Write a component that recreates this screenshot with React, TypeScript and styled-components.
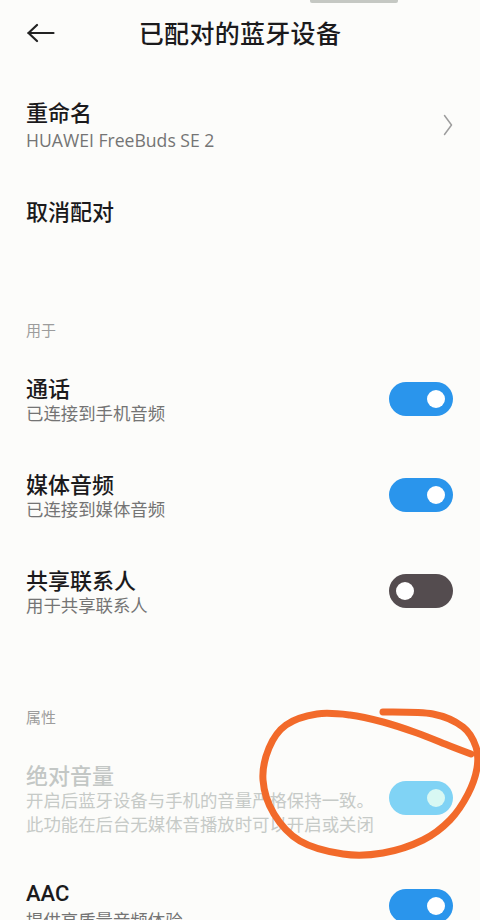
import React from "react";
import styled, { createGlobalStyle } from "styled-components";

const Global = createGlobalStyle`
  html, body { margin: 0; padding: 0; background: #fcfcfa; }
  body { font-family: "Noto Sans CJK SC", "Noto Sans", sans-serif; overflow: hidden; }
`;

const Page = styled.div`
  position: relative;
  width: 480px;
  min-height: 920px;
  background: #fcfcfa;
  color: #1b1a1c;
`;

const TopStrip = styled.div`
  height: 3px;
  display: flex;
  padding-left: 310px;
`;

const StripBar = styled.div`
  width: 88px;
  height: 3px;
  background: #c5c8c3;
  border-radius: 0 0 2px 2px;
`;

const Header = styled.header`
  height: 57px;
  display: flex;
  align-items: center;
  padding: 0 27px;
`;

const BackButton = styled.div`
  width: 28px;
  height: 28px;
  display: flex;
  align-items: center;
  margin-top: 3px;
`;

const Title = styled.h1`
  flex: 1;
  margin: 0;
  padding-right: 28px;
  text-align: center;
  font-size: 25px;
  line-height: 32px;
  font-weight: 500;
  color: #1b1a1c;
  letter-spacing: 0.3px;
`;

const Group = styled.section<{ $bottom?: number }>`
  padding-top: 15px;
  padding-bottom: ${(p) => p.$bottom ?? 0}px;
`;

const Section = styled.section<{ $top: number }>`
  display: flex;
  flex-direction: column;
  padding-top: ${(p) => p.$top}px;
`;

const SectionLabel = styled.div`
  padding: 0 26px 11px;
  font-size: 15px;
  line-height: 20px;
  color: #9c9c9c;
`;

const Row = styled.div`
  display: flex;
  align-items: center;
  padding: 22px 27px 22px 26px;
  gap: 12px;
`;

const TextBlock = styled.div`
  flex: 1;
  display: flex;
  flex-direction: column;
  min-width: 0;
`;

const RowTitle = styled.div<{ $muted?: boolean; $latin?: boolean }>`
  font-size: 22px;
  line-height: 28px;
  font-weight: 500;
  color: ${(p) => (p.$muted ? "#c3c7c5" : "#1b1a1c")};
  font-family: ${(p) =>
    p.$latin ? `"Roboto", "Noto Sans CJK SC", sans-serif` : `"Noto Sans CJK SC", sans-serif`};
`;

const RowSub = styled.div<{ $muted?: boolean; $latin?: boolean }>`
  font-size: ${(p) => (p.$latin ? "17.6px" : "17.4px")};
  line-height: 24px;
  margin-top: ${(p) => (p.$latin ? "3px" : "0")};
  color: ${(p) => (p.$muted ? "#c6cac7" : "#747474")};
  white-space: nowrap;
  font-family: ${(p) =>
    p.$latin ? `"Open Sans", "Noto Sans CJK SC", sans-serif` : `"Noto Sans CJK SC", sans-serif`};
`;

const Chevron = styled.div`
  width: 10px;
  height: 22px;
  display: flex;
  align-items: center;
`;

const Switch = styled.div<{ $on: boolean; $muted?: boolean }>`
  flex: none;
  width: 64px;
  height: 34px;
  border-radius: 17px;
  box-sizing: border-box;
  padding: 0 8px 0 7px;
  display: flex;
  align-items: center;
  justify-content: ${(p) => (p.$on ? "flex-end" : "flex-start")};
  background: ${(p) => (p.$muted ? "#80d3f5" : p.$on ? "#2a95ec" : "#544c4f")};
`;

const Knob = styled.span<{ $muted?: boolean }>`
  width: 18px;
  height: 18px;
  border-radius: 50%;
  background: ${(p) => (p.$muted ? "#d8f8f3" : "#ffffff")};
`;

const Annotation = styled.svg`
  position: absolute;
  left: 0;
  top: 0;
  width: 480px;
  height: 920px;
  pointer-events: none;
`;

type Pt = [number, number];

function smoothPath(pts: Pt[]): string {
  let d = `M${pts[0][0]} ${pts[0][1]}`;
  for (let i = 0; i < pts.length - 1; i++) {
    const p0 = pts[i - 1] || pts[i];
    const p1 = pts[i];
    const p2 = pts[i + 1];
    const p3 = pts[i + 2] || p2;
    const c1x = p1[0] + (p2[0] - p0[0]) / 6;
    const c1y = p1[1] + (p2[1] - p0[1]) / 6;
    const c2x = p2[0] - (p3[0] - p1[0]) / 6;
    const c2y = p2[1] - (p3[1] - p1[1]) / 6;
    d += ` C${c1x.toFixed(1)} ${c1y.toFixed(1)} ${c2x.toFixed(1)} ${c2y.toFixed(1)} ${p2[0]} ${p2[1]}`;
  }
  return d;
}

const loop: Pt[] = [
  [383, 712], [433, 714], [463, 727], [476, 747], [477, 768], [468, 794],
  [450, 820], [423, 840], [383, 853], [343, 854], [300, 841], [274, 814],
  [263, 780], [269, 748], [286, 725], [317, 714], [350, 715], [383, 722],
  [417, 733], [450, 746], [471, 754],
];

type Item = { title: string; sub?: string[]; on: boolean; muted?: boolean; latin?: boolean };

const ToggleRow = ({ title, sub, on, muted, latin }: Item) => (
  <Row>
    <TextBlock>
      <RowTitle $muted={muted} $latin={latin}>{title}</RowTitle>
      {sub?.map((s) => (
        <RowSub key={s} $muted={muted}>{s}</RowSub>
      ))}
    </TextBlock>
    <Switch $on={on} $muted={muted}>
      <Knob $muted={muted} />
    </Switch>
  </Row>
);

export default function App() {
  return (
    <Page>
      <Global />
      <TopStrip>
        <StripBar />
      </TopStrip>
      <Header>
        <BackButton>
          <svg width="28" height="20" viewBox="0 0 28 20" fill="none" stroke="#222" strokeWidth="2.2" strokeLinecap="round" strokeLinejoin="round">
            <path d="M1.5 10 H26.5" />
            <path d="M10 2 L1.5 10 L10 18" />
          </svg>
        </BackButton>
        <Title>已配对的蓝牙设备</Title>
      </Header>

      <Group $bottom={6}>
        <Row>
          <TextBlock>
            <RowTitle>重命名</RowTitle>
            <RowSub $latin>HUAWEI FreeBuds SE 2</RowSub>
          </TextBlock>
          <Chevron>
            <svg width="10" height="22" viewBox="0 0 10 22" fill="none" stroke="#9d9d9d" strokeWidth="1.5" strokeLinecap="round" strokeLinejoin="round">
              <path d="M1.5 1.5 L8.5 11 L1.5 20.5" />
            </svg>
          </Chevron>
        </Row>
        <Row>
          <TextBlock>
            <RowTitle>取消配对</RowTitle>
          </TextBlock>
        </Row>
      </Group>

      <Section $top={68}>
        <SectionLabel>用于</SectionLabel>
        <ToggleRow title="通话" sub={["已连接到手机音频"]} on />
        <ToggleRow title="媒体音频" sub={["已连接到媒体音频"]} on />
        <ToggleRow title="共享联系人" sub={["用于共享联系人"]} on={false} />
      </Section>

      <Section $top={68}>
        <SectionLabel>属性</SectionLabel>
        <ToggleRow
          title="绝对音量"
          sub={["开启后蓝牙设备与手机的音量严格保持一致。", "此功能在后台无媒体音播放时可以开启或关闭"]}
          on
          muted
        />
        <ToggleRow title="AAC" sub={["提供高质量音频体验"]} on latin />
      </Section>

      <Annotation viewBox="0 0 480 920">
        <path d={smoothPath(loop)} fill="none" stroke="#f26a2a" strokeWidth="7" strokeLinecap="round" strokeLinejoin="round" />
      </Annotation>
    </Page>
  );
}
